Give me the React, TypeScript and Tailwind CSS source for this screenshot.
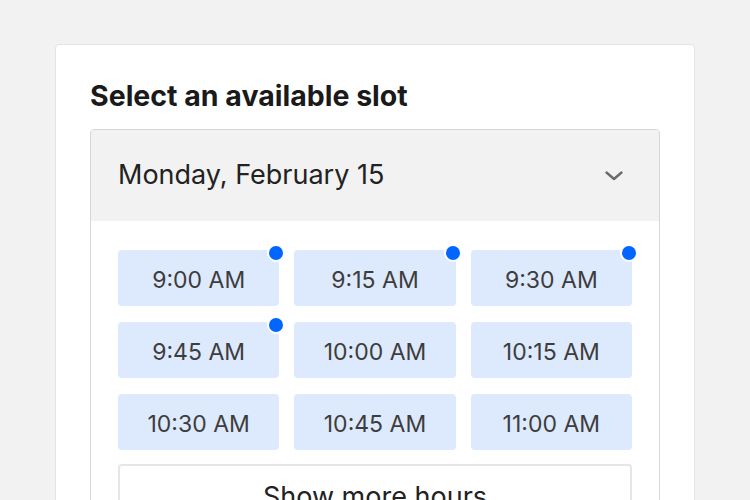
const slots = [
  { label: "9:00 AM", dot: true },
  { label: "9:15 AM", dot: true },
  { label: "9:30 AM", dot: true },
  { label: "9:45 AM", dot: true },
  { label: "10:00 AM", dot: false },
  { label: "10:15 AM", dot: false },
  { label: "10:30 AM", dot: false },
  { label: "10:45 AM", dot: false },
  { label: "11:00 AM", dot: false },
];

export default function App() {
  return (
    <div
      className="h-[500px] w-[750px] overflow-hidden bg-[#f2f2f2] px-[55px] pt-[44px]"
      style={{ fontFamily: "Inter, 'Noto Sans', sans-serif" }}
    >
      <div className="h-[600px] rounded-[4px] border border-[#e4e4e4] bg-white px-[34px] pt-[35px]">
        <h2 className="text-[28.5px] font-bold leading-[32px] text-[#1a1a1a]">
          Select an available slot
        </h2>

        <div className="mt-[17px] overflow-hidden rounded-[4px] border border-[#d6d6d6]">
          <button className="flex h-[91px] w-full items-center justify-between bg-[#f2f2f2] pl-[27px] pr-[35px]">
            <span className="text-[27px] text-[#222222]">Monday, February 15</span>
            <svg width="20" height="12" viewBox="0 0 20 12" fill="none">
              <path
                d="M2.5 2.5L10 9L17.5 2.5"
                stroke="#6b6b6b"
                strokeWidth="2.4"
                strokeLinecap="round"
                strokeLinejoin="round"
              />
            </svg>
          </button>

          <div className="px-[27px] pt-[29px]">
            <div className="grid grid-cols-3 gap-x-[15px] gap-y-4">
              {slots.map((slot) => (
                <button
                  key={slot.label}
                  className="relative flex h-14 items-center justify-center rounded-[4px] bg-[#dde9fc] pt-1 text-[23px] text-[#3d3d3d]"
                >
                  {slot.label}
                  {slot.dot && (
                    <span className="absolute -right-[6px] -top-[6px] h-[18px] w-[18px] rounded-full border-2 border-white bg-[#0066ff]" />
                  )}
                </button>
              ))}
            </div>

            <button className="mt-[14px] flex h-[66px] w-full items-center justify-center rounded-[4px] border-2 border-[#e6e6e6] bg-white text-[27px] text-[#222222]">
              Show more hours
            </button>
          </div>
        </div>
      </div>
    </div>
  );
}
